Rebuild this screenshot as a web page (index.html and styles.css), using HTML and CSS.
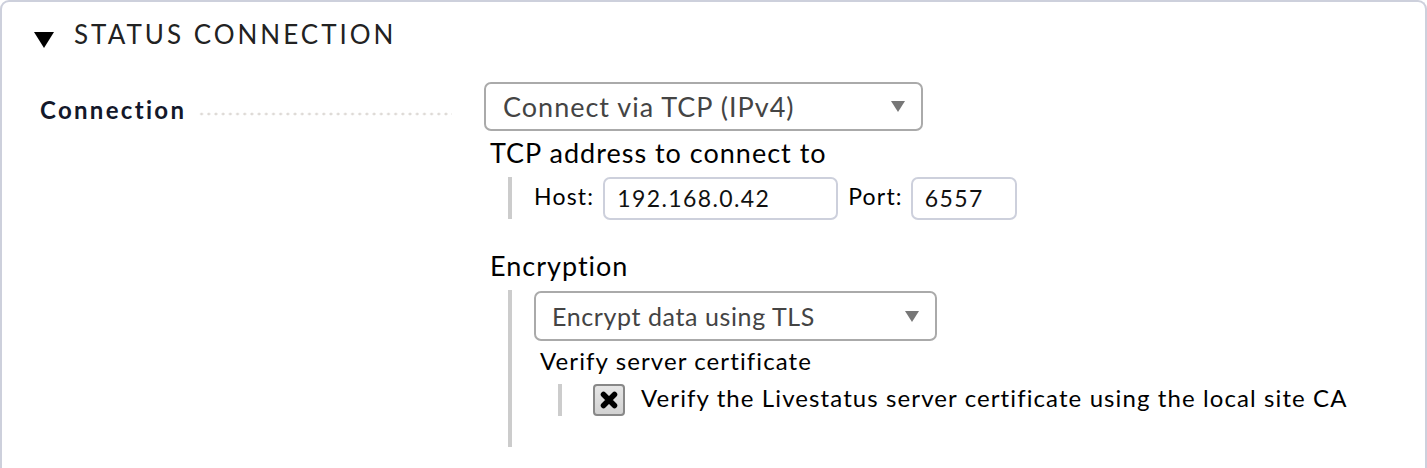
FILE: index.html
```html
<!DOCTYPE html>
<html>
<head>
<meta charset="utf-8">
<link rel="stylesheet" href="styles.css">
</head>
<body>
<div class="box">
  <div class="head">
    <span class="tri"></span>
    <span class="title">STATUS CONNECTION</span>
  </div>
  <div class="row">
    <div class="legend">
      <span class="lbl">Connection</span>
      <span class="dots"></span>
    </div>
    <div class="content">
      <div class="select sel1"><span>Connect via TCP (IPv4)</span><span class="arr"></span></div>
      <div class="sub">TCP address to connect to</div>
      <div class="indent tcp">
        <span class="fl">Host:</span>
        <span class="inp host">192.168.0.42</span>
        <span class="fl port-l">Port:</span>
        <span class="inp port">6557</span>
      </div>
      <div class="sub enc">Encryption</div>
      <div class="indent encbox">
        <div class="select sel2"><span>Encrypt data using TLS</span><span class="arr"></span></div>
        <div class="sub2">Verify server certificate</div>
        <div class="indent chk">
          <span class="cb"><svg width="20" height="20" viewBox="0 0 20 20"><path d="M4.5 4.5 L15.5 15.5 M15.5 4.5 L4.5 15.5" stroke="#000" stroke-width="5.5" stroke-linecap="round"/></svg></span>
          <span class="ct">Verify the Livestatus server certificate using the local site CA</span>
        </div>
      </div>
    </div>
  </div>
</div>
</body>
</html>
```

FILE: styles.css
```css
html, body {
  margin: 0;
  padding: 0;
  background: #fff;
  overflow: hidden;
}
body {
  font-family: Lato, "Open Sans", sans-serif;
  color: #000;
  width: 1427px;
  height: 468px;
}
.box {
  box-sizing: border-box;
  width: 1427px;
  height: 480px;
  border: 2px solid #cdd0dc;
  border-bottom: none;
  border-radius: 9px 9px 0 0;
}
.head {
  display: flex;
  align-items: center;
  height: 64px;
  padding-left: 32px;
}
.tri {
  width: 0;
  height: 0;
  border-left: 10px solid transparent;
  border-right: 10px solid transparent;
  border-top: 16px solid #000;
  margin-top: 12px;
}
.title {
  margin-left: 20px;
  font-size: 26px;
  letter-spacing: 3px;
  color: #222;
  margin-top: 0;
}
.row {
  display: flex;
  margin-top: 16px;
}
.legend {
  width: 450px;
  display: flex;
  align-items: flex-end;
  height: 42px;
  padding-left: 38px;
  box-sizing: border-box;
}
.lbl {
  font-weight: bold;
  font-size: 24px;
  letter-spacing: 2.3px;
  color: #13182a;
  line-height: 28px;
  padding-bottom: 0;
}
.dots {
  flex: 1;
  margin-left: 12px;
  height: 4px;
  margin-bottom: 8px;
  background-image: radial-gradient(circle, #dedad6 1.2px, transparent 1.7px);
  background-size: 7.2px 4px;
  background-repeat: repeat-x;
}
.content {
  margin-left: 32px;
}
.select {
  box-sizing: border-box;
  border: 2px solid #aaa;
  border-radius: 7px;
  display: flex;
  align-items: center;
  justify-content: space-between;
  color: #444;
}
.sel1 {
  width: 439px;
  height: 49px;
  padding: 0 16px 0 17px;
  font-size: 27px;
  letter-spacing: 1px;
}
.sel2 {
  width: 403px;
  height: 50px;
  padding: 0 16px 0 16px;
  font-size: 25px;
  letter-spacing: 0.6px;
}
.arr {
  width: 0;
  height: 0;
  border-left: 7.5px solid transparent;
  border-right: 7.5px solid transparent;
  border-top: 11px solid #777;
}
.sub {
  font-size: 27px;
  letter-spacing: 1px;
  margin-left: 6px;
  line-height: 32px;
  margin-top: 6px;
}
.indent {
  border-left: 4px solid #ccc;
  margin-left: 24px;
}
.tcp {
  display: flex;
  align-items: center;
  height: 42px;
  margin-top: 8px;
  padding-left: 22px;
}
.fl {
  font-size: 23px;
  letter-spacing: 1.2px;
  margin-right: 9px;
  margin-top: -4px;
}
.port-l {
  margin-right: 8px;
}
.inp {
  box-sizing: border-box;
  height: 43px;
  border: 2px solid #cdd0dc;
  border-radius: 7px;
  display: flex;
  align-items: center;
  padding-left: 12px;
  font-size: 23px;
  letter-spacing: 1.4px;
  color: #111;
}
.host {
  width: 235px;
  margin-right: 10px;
}
.port {
  width: 106px;
}
.enc {
  margin-top: 31px;
}
.encbox {
  margin-top: 8px;
  padding-left: 22px;
  padding-top: 1px;
  height: 157px;
  box-sizing: border-box;
}
.sub2 {
  font-size: 24px;
  letter-spacing: 1.1px;
  margin-left: 6px;
  margin-top: 5px;
  line-height: 30px;
}
.chk {
  display: flex;
  align-items: center;
  margin-top: 8px;
  height: 32px;
  padding-left: 31px;
}
.cb {
  box-sizing: border-box;
  width: 32px;
  height: 32px;
  border: 2px solid #888;
  border-radius: 4px;
  background: linear-gradient(#e6e6e6, #d2d2d2);
  display: flex;
  align-items: center;
  justify-content: center;
}
.ct {
  margin-left: 16px;
  font-size: 24px;
  letter-spacing: 1.1px;
  margin-top: -6px;
}
```
